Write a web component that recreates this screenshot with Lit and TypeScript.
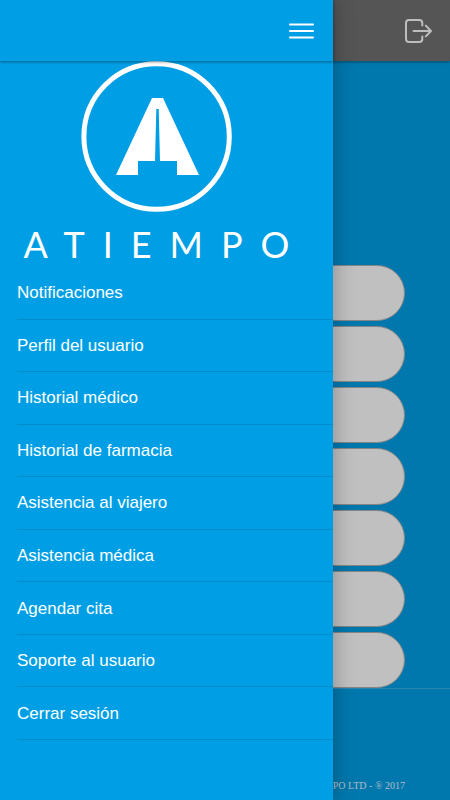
import { LitElement, html, css } from "lit";
import { customElement, property } from "lit/decorators.js";

const MENU = [
  "Notificaciones",
  "Perfil del usuario",
  "Historial médico",
  "Historial de farmacia",
  "Asistencia al viajero",
  "Asistencia médica",
  "Agendar cita",
  "Soporte al usuario",
  "Cerrar sesión",
];

@customElement("side-menu")
export class SideMenu extends LitElement {
  @property({ type: Array }) items: string[] = [];

  static styles = css`
    :host {
      display: flex;
      flex-direction: column;
      background: #009fe5;
      color: #fff;
      font-family: "Liberation Sans", Arial, sans-serif;
      box-shadow: 0 0 20px rgba(0, 0, 0, 0.3);
    }
    .bar {
      display: flex;
      justify-content: flex-end;
      align-items: center;
      height: 61px;
      padding-right: 19px;
      position: relative;
      z-index: 1;
      box-shadow: 0 1px 3px rgba(0, 0, 0, 0.4);
      background: #009fe5;
    }
    .toggle {
      display: block;
      border: 0;
      padding: 0;
      background: none;
      color: inherit;
    }
    svg {
      display: block;
    }
    .brand {
      display: flex;
      flex-direction: column;
      align-items: center;
      padding-right: 20px;
    }
    .wordmark {
      margin: 9px 0 0;
      padding-left: 18px;
      font: 400 36px/46px Lato, "Open Sans", sans-serif;
      letter-spacing: 18px;
      white-space: nowrap;
    }
    .menu {
      list-style: none;
      margin: 0;
      padding: 0 0 0 17px;
      display: grid;
      grid-auto-rows: 1fr;
      height: 473px;
    }
    .item {
      display: flex;
      border-bottom: 1px solid #008bca;
    }
    .link {
      display: flex;
      flex: 1;
      align-items: center;
      padding-top: 1px;
      color: inherit;
      text-decoration: none;
      font-size: 17px;
      line-height: 24px;
    }
  `;

  render() {
    return html`
      <div class="bar">
        <button class="toggle" aria-label="Menú">
          <svg width="25" height="16" viewBox="0 0 25 16" fill="none" stroke="#fff" stroke-width="2" stroke-linecap="round">
            <path d="M1 1.5h23M1 8h23M1 14.5h23" />
          </svg>
        </button>
      </div>
      <div class="brand">
        <svg width="152" height="151" viewBox="0 0 152 151" fill="#fff" role="img" aria-label="Atiempo">
          <circle cx="75.6" cy="75.5" r="72.7" fill="none" stroke="#fff" stroke-width="5" />
          <path d="M71 37H82L118 114H96V100H79L77.7 48H75.3L74 100H57V114H35Z" />
        </svg>
        <p class="wordmark">ATIEMPO</p>
      </div>
      <nav>
        <ul class="menu">
          ${this.items.map(
            (label) => html`<li class="item"><a class="link" href="#">${label}</a></li>`
          )}
        </ul>
      </nav>
    `;
  }
}

@customElement("app-root")
export class AppRoot extends LitElement {
  static styles = css`
    :host {
      display: block;
      position: relative;
      min-height: 100vh;
      overflow: hidden;
      background: #0078ad;
    }
    .page {
      display: flex;
      flex-direction: column;
      min-height: 100vh;
    }
    .header {
      display: flex;
      justify-content: flex-end;
      align-items: center;
      height: 61px;
      padding-right: 18px;
      background: #555;
      box-shadow: 0 1px 3px rgba(0, 0, 0, 0.4);
    }
    .exit {
      display: block;
      border: 0;
      padding: 0;
      background: none;
    }
    svg {
      display: block;
    }
    .actions {
      display: grid;
      grid-auto-rows: 1fr;
      gap: 5px;
      height: 423px;
      margin-top: 204px;
      padding: 0 45px;
    }
    .action {
      border: 1px solid #858585;
      border-radius: 28px;
      background: #c0c0c0;
    }
    .footer {
      flex: 1;
      display: flex;
      align-items: flex-end;
      justify-content: flex-end;
      border-top: 1px solid #2b84b0;
      padding: 0 45px 8px;
      color: #b4bcc6;
      font: 10px/12px "Liberation Serif", "Times New Roman", serif;
    }
    .drawer {
      position: absolute;
      inset: 0 26% 0 0;
    }
  `;

  render() {
    return html`
      <div class="page">
        <header class="header">
          <button class="exit" aria-label="Salir">
            <svg width="27" height="24" viewBox="0 0 27 24" fill="none" stroke="#bdbdbd" stroke-width="2" stroke-linecap="round" stroke-linejoin="round">
              <path d="M17.3 6.5V4Q17.3 1 14.3 1H4Q1 1 1 4V20Q1 23 4 23H14.3Q17.3 23 17.3 20V17.5M8.5 12H26M20.8 6.6L26 12L20.8 17.4" />
            </svg>
          </button>
        </header>
        <main class="actions">
          ${MENU.slice(0, 7).map(
            (label) => html`<button class="action" aria-label=${label}></button>`
          )}
        </main>
        <footer class="footer">ATIEMPO LTD - ® 2017</footer>
      </div>
      <side-menu class="drawer" .items=${MENU}></side-menu>
    `;
  }
}
